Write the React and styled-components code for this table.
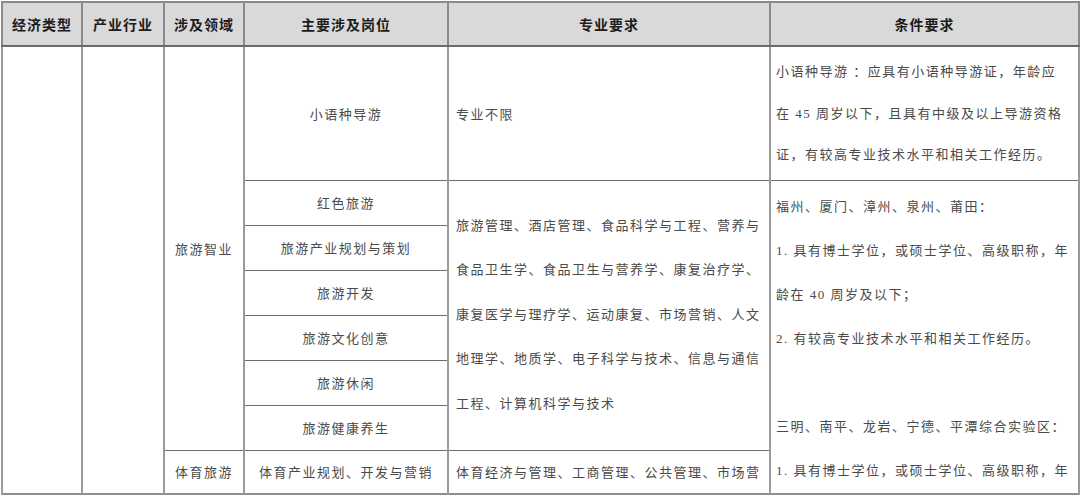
import React from 'react';
import styled, { createGlobalStyle } from 'styled-components';

const GlobalStyle = createGlobalStyle`
  html, body {
    margin: 0;
    padding: 0;
    background: #ffffff;
  }
  body {
    font-family: "Liberation Serif", "Noto Sans CJK SC", serif;
    overflow: hidden;
  }
`;

const Page = styled.div`
  width: 1080px;
  height: 498px;
  padding: 1px 0 0 1px;
  box-sizing: border-box;
  background: #fff;
`;

const Table = styled.table`
  border-collapse: collapse;
  table-layout: fixed;
  width: 1077px;
  border: 2px solid #8e8e8e;
`;

const Col = styled.col`
  width: ${p => p.$w}px;
`;

const HeadCell = styled.th`
  height: 42px;
  padding: 0;
  background: #d9d9d9;
  border: 2px solid #8a8a8a;
  border-bottom-color: #6a6a6a;
  font-family: "Noto Sans CJK SC", sans-serif;
  font-weight: 700;
  font-size: 14px;
  letter-spacing: 1px;
  color: #1c1c1c;
  text-align: center;
  vertical-align: middle;
`;

const Row = styled.tr`
  height: ${p => p.$h}px;
`;

const Cell = styled.td`
  padding: 0 ${p => (p.$align === 'left' ? '4px' : '0')} 0 ${p => p.$pad || 0}px;
  border-left: 2px solid #9a9a9a;
  border-right: 2px solid #9a9a9a;
  border-top: 1px solid ${p => (p.$dark ? '#1f1f1f' : '#6e6e6e')};
  border-bottom: 1px solid #6e6e6e;
  font-size: 13px;
  letter-spacing: 1.5px;
  color: #4a4a4a;
  text-align: ${p => p.$align || 'center'};
  vertical-align: ${p => p.$valign || 'middle'};
  white-space: nowrap;
  overflow: hidden;
`;

const Lines = styled.div`
  line-height: ${p => p.$lh}px;
  padding-top: ${p => p.$top || 0}px;
  max-height: ${p => p.$max || 'none'};
  overflow: hidden;
`;

const Line = styled.div`
  height: ${p => p.$lh}px;
`;

const TextBlock = ({ lines, lh, top, max }) => (
  <Lines $lh={lh} $top={top} $max={max}>
    {lines.map((l, i) => (
      <Line key={i} $lh={lh}>{l || '\u00a0'}</Line>
    ))}
  </Lines>
);

const headers = ['经济类型', '产业行业', '涉及领域', '主要涉及岗位', '专业要求', '条件要求'];
const widths = [80, 82, 80, 204, 322, 309];

const tourJobs = ['旅游产业规划与策划', '旅游开发', '旅游文化创意', '旅游休闲', '旅游健康养生'];

const guideCond = [
  '小语种导游 ：应具有小语种导游证，年龄应',
  '在 45 周岁以下，且具有中级及以上导游资格',
  '证，有较高专业技术水平和相关工作经历。',
];

const majors = [
  '旅游管理、酒店管理、食品科学与工程、营养与',
  '食品卫生学、食品卫生与营养学、康复治疗学、',
  '康复医学与理疗学、运动康复、市场营销、人文',
  '地理学、地质学、电子科学与技术、信息与通信',
  '工程、计算机科学与技术',
];

const cityCond = [
  '福州、厦门、漳州、泉州、莆田：',
  '1. 具有博士学位，或硕士学位、高级职称，年',
  '龄在 40 周岁及以下；',
  '2. 有较高专业技术水平和相关工作经历。',
  '',
  '三明、南平、龙岩、宁德、平潭综合实验区：',
  '1. 具有博士学位，或硕士学位、高级职称，年',
];

export default function App() {
  return (
    <>
      <GlobalStyle />
      <Page>
        <Table>
          <colgroup>
            {widths.map((w, i) => <Col key={i} $w={w} />)}
          </colgroup>
          <thead>
            <tr>
              {headers.map(h => <HeadCell key={h}>{h}</HeadCell>)}
            </tr>
          </thead>
          <tbody>
            <Row $h={134}>
              <Cell rowSpan={8} />
              <Cell rowSpan={8} />
              <Cell rowSpan={7}>旅游智业</Cell>
              <Cell>小语种导游</Cell>
              <Cell $align="left" $pad={7}>专业不限</Cell>
              <Cell $align="left" $pad={5}>
                <TextBlock lines={guideCond} lh={41.5} />
              </Cell>
            </Row>
            <Row $h={45}>
              <Cell $dark>红色旅游</Cell>
              <Cell rowSpan={6} $dark $align="left" $pad={7}>
                <TextBlock lines={majors} lh={44.5} />
              </Cell>
              <Cell rowSpan={7} $dark $align="left" $pad={5} $valign="top">
                <TextBlock lines={cityCond} lh={44} top={4} max="310px" />
              </Cell>
            </Row>
            {tourJobs.map(j => (
              <Row key={j} $h={45}>
                <Cell>{j}</Cell>
              </Row>
            ))}
            <Row $h={43}>
              <Cell>体育旅游</Cell>
              <Cell>体育产业规划、开发与营销</Cell>
              <Cell $align="left" $pad={7}>体育经济与管理、工商管理、公共管理、市场营</Cell>
            </Row>
          </tbody>
        </Table>
      </Page>
    </>
  );
}
